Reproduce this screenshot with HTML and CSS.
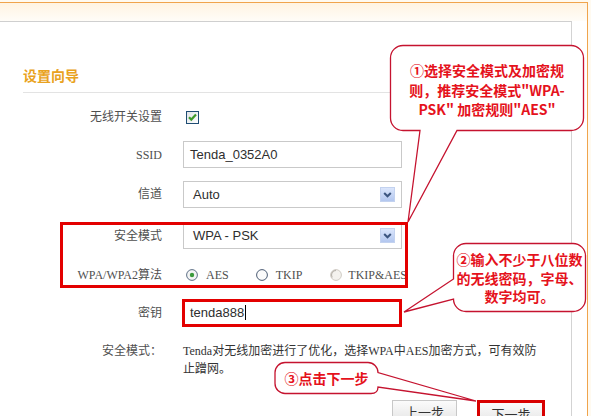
FILE: index.html
```html
<!DOCTYPE html>
<html lang="zh-CN">
<head>
<meta charset="utf-8">
<title>设置向导</title>
<link rel="stylesheet" href="styles.css">
</head>
<body>
<div class="frame">
  <div class="strip"></div>
  <div class="panel">
    <h2 class="title">设置向导</h2>
    <div class="form">
      <div class="row h36">
        <div class="label">无线开关设置</div>
        <div class="ctl">
          <svg class="check" width="13" height="13" viewBox="0 0 13 13">
            <defs><linearGradient id="cb" x1="0" y1="0" x2="1" y2="1"><stop offset="0" stop-color="#dfe3e6"/><stop offset="1" stop-color="#ffffff"/></linearGradient></defs>
            <rect x="0.5" y="0.5" width="12" height="12" fill="url(#cb)" stroke="#1f4d74"/>
            <path d="M3 6.2 L5.3 8.6 L10 3.6" fill="none" stroke="#3f9a2b" stroke-width="2.2"/>
          </svg>
        </div>
      </div>
      <div class="row h39">
        <div class="label">SSID</div>
        <div class="field">Tenda_0352A0</div>
      </div>
      <div class="row h40">
        <div class="label">信道</div>
        <div class="field select"><span>Auto</span><span class="arrow"><svg width="13" height="13" viewBox="0 0 13 13"><path d="M3.2 5 L6.5 8.3 L9.8 5" fill="none" stroke="#3b557f" stroke-width="2"/></svg></span></div>
      </div>
      <div class="row h43">
        <div class="label">安全模式</div>
        <div class="field select"><span>WPA - PSK</span><span class="arrow"><svg width="13" height="13" viewBox="0 0 13 13"><path d="M3.2 5 L6.5 8.3 L9.8 5" fill="none" stroke="#3b557f" stroke-width="2"/></svg></span></div>
      </div>
      <div class="row h36">
        <div class="label">WPA/WPA2算法</div>
        <div class="radios">
          <span class="opt gap27"><svg width="12" height="12" viewBox="0 0 12 12"><circle cx="6" cy="6" r="5.4" fill="#f3f4f4" stroke="#5d6f86"/><circle cx="6" cy="6" r="2.2" fill="#3c9a3c"/></svg>AES</span>
          <span class="opt gap28"><svg width="12" height="12" viewBox="0 0 12 12"><circle cx="6" cy="6" r="5.4" fill="#fbfbfb" stroke="#4a5b73"/></svg>TKIP</span>
          <span class="opt dim"><svg width="12" height="12" viewBox="0 0 12 12"><circle cx="6" cy="6" r="5.4" fill="#f4f2ee" stroke="#cfcbc4"/><path d="M2.2 8.5 A4.6 4.6 0 0 1 6 1.4" fill="none" stroke="#b9b5ae" stroke-width="1.2"/></svg>TKIP&amp;AES</span>
        </div>
      </div>
      <div class="row h39">
        <div class="label">密钥</div>
        <div class="field key">tenda888<span class="caret"></span></div>
      </div>
    </div>
    <div class="row desc-row">
      <div class="label">安全模式：</div>
      <div class="desc">Tenda对无线加密进行了优化，选择WPA中AES加密方式，可有效防<br>止蹭网。</div>
    </div>
    <div class="btns">
      <div class="btn">上一步</div>
      <div class="btn next">下一步</div>
    </div>
  </div>
</div>

<div class="hl"></div>

<svg class="overlay" width="591" height="416" viewBox="0 0 591 416">
  <path class="bubble" d="M403,45.5 H571 A12.5,12.5 0 0 1 583.5,58 V118 A12.5,12.5 0 0 1 571,130.5 H457 L408,222 L420,130.5 H403 A12.5,12.5 0 0 1 390.5,118 V58 A12.5,12.5 0 0 1 403,45.5 Z"/>
  <path class="bubble" d="M466,243.5 H573 A12.5,12.5 0 0 1 585.5,256 V299 A12.5,12.5 0 0 1 573,311.5 H466 A12.5,12.5 0 0 1 453.5,299 L404,312 L453.5,279 V256 A12.5,12.5 0 0 1 466,243.5 Z"/>
  <path class="bubble" d="M285,362.5 H368 A10,10 0 0 1 378,372.5 L476,401 L378,387 Q378,393.5 371,393.5 H285 A10,10 0 0 1 275,383.5 V372.5 A10,10 0 0 1 285,362.5 Z"/>
</svg>

<div class="tip tip1">①选择安全模式及加密规<br>则，推荐安全模式"WPA-<br>PSK" 加密规则"AES"</div>
<div class="tip tip2">②输入不少于八位数<br>的无线密码，字母、<br>数字均可。</div>
<div class="tip tip3">③点击下一步</div>
</body>
</html>
```
FILE: styles.css
```css
* { box-sizing: border-box; }

body {
  margin: 0;
  width: 591px;
  height: 416px;
  overflow: hidden;
  position: relative;
  background: #fffaf0;
  font-family: "Liberation Serif", "Noto Sans CJK SC", serif;
  font-size: 12px;
  color: #4f4f4f;
}

.frame {
  margin-top: 2px;
  width: 588px;
  height: 414px;
  border-top: 1px solid #f0a44c;
  border-right: 1px solid #f0a44c;
  background: #fff;
}

.strip {
  height: 18px;
  background: linear-gradient(#fff4e2, #fffdf8);
}

.panel {
  width: 572px;
  height: 395px;
  border-top: 1px solid #cfcfcf;
  border-right: 1px solid #d3d3d3;
}

.title {
  margin: 43px 0 0 23px;
  padding-bottom: 7px;
  border-bottom: 1px solid #e3e3e3;
  font: bold 14px/20px "Noto Sans CJK SC", sans-serif;
  color: #e9a220;
}

.form { padding-top: 6px; }

.row {
  display: grid;
  grid-template-columns: 162px 219px;
  column-gap: 21px;
  align-items: center;
}
.h36 { height: 36px; }
.h39 { height: 39px; }
.h40 { height: 40px; }
.h43 { height: 43px; }

.label {
  text-align: right;
  white-space: nowrap;
  line-height: 18px;
}

.ctl { display: flex; align-items: center; padding-left: 3px; }
.check { display: block; }

.field {
  height: 27px;
  border: 1px solid #c9c9c9;
  padding-left: 6px;
  display: flex;
  align-items: center;
  font: 13px "Liberation Sans", "Noto Sans CJK SC", sans-serif;
  color: #2e2e2e;
  background: #fff;
}

.select {
  justify-content: space-between;
  padding-left: 9px;
  padding-right: 6px;
}

.arrow {
  width: 15px;
  height: 15px;
  display: flex;
  align-items: center;
  justify-content: center;
  background: linear-gradient(#dbe6fc, #b3c7ef);
  border: 1px solid #c3d2ef;
}

.radios {
  display: flex;
  align-items: center;
  padding-left: 3px;
  white-space: nowrap;
}
.opt { display: flex; align-items: center; gap: 8px; }
.opt svg { display: block; }
.gap27 { margin-right: 27px; }
.gap28 { margin-right: 28px; }
.dim { gap: 6px; }

.key {
  margin-left: -1px;
  width: 220px;
  height: 28px;
  border: 3px solid #e30000;
  padding-left: 5px;
}
.caret {
  display: inline-block;
  width: 1px;
  height: 15px;
  margin-left: 1px;
  background: #000;
}

.desc-row {
  margin-top: 10px;
  align-items: start;
}
.desc {
  width: 380px;
  line-height: 18px;
  color: #333;
  white-space: nowrap;
}

.btns {
  display: flex;
  align-items: flex-start;
  gap: 20px;
  padding-left: 392px;
  margin-top: 22px;
}
.btn {
  width: 65px;
  height: 24px;
  border: 1px solid #c8c8c8;
  background: linear-gradient(#fbfbfb, #e4e4e4);
  font: 13px/22px "Noto Sans CJK SC", sans-serif;
  color: #333;
  text-align: center;
}
.next {
  width: 68px;
  height: 27px;
  border: 3px solid #d80000;
  line-height: 21px;
}

.hl {
  position: absolute;
  left: 60px;
  top: 222px;
  width: 348px;
  height: 66px;
  border: 3px solid #e30000;
}

.overlay {
  position: absolute;
  left: 0;
  top: 0;
  pointer-events: none;
}
.bubble {
  fill: #fff;
  stroke: #c5132f;
  stroke-width: 1.3;
}

.tip {
  position: absolute;
  font: bold 14px/19.5px "Noto Sans CJK SC", sans-serif;
  color: #e5121c;
  text-align: center;
  white-space: nowrap;
}
.tip1 { left: 390px; top: 61px; width: 194px; }
.tip2 { left: 453px; top: 250px; width: 133px; line-height: 18.5px; }
.tip3 { left: 275px; top: 368px; width: 103px; line-height: 20px; }
```
